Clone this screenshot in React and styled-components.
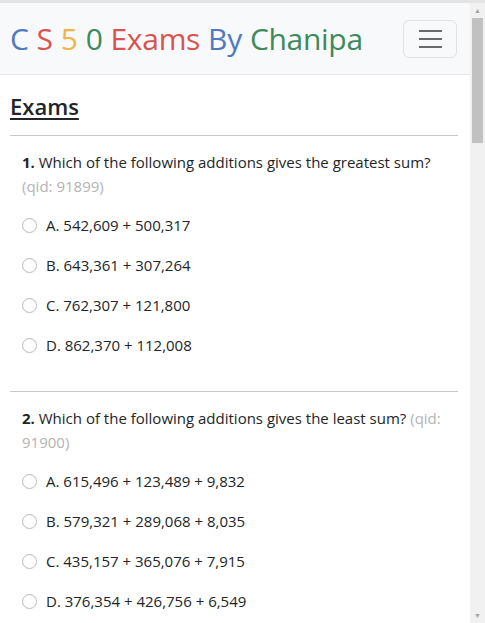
import React from "react";
import styled, { createGlobalStyle } from "styled-components";

const GlobalStyle = createGlobalStyle`
  html, body {
    margin: 0;
    padding: 0;
    overflow: hidden;
  }
  body {
    font-family: "Open Sans", "Noto Sans", sans-serif;
    color: #212529;
    background: #fff;
  }
`;

const exams = [
  {
    no: 1,
    text: "Which of the following additions gives the greatest sum?",
    qid: 91899,
    options: [
      "A. 542,609 + 500,317",
      "B. 643,361 + 307,264",
      "C. 762,307 + 121,800",
      "D. 862,370 + 112,008",
    ],
  },
  {
    no: 2,
    text: "Which of the following additions gives the least sum?",
    qid: 91900,
    options: [
      "A. 615,496 + 123,489 + 9,832",
      "B. 579,321 + 289,068 + 8,035",
      "C. 435,157 + 365,076 + 7,915",
      "D. 376,354 + 426,756 + 6,549",
    ],
  },
];

const brand = [
  { t: "C", c: "#4f7ac0" },
  { t: "S", c: "#d9534f" },
  { t: "5", c: "#f0b44c" },
  { t: "0", c: "#3d8a5c" },
  { t: "Exams", c: "#d9534f" },
  { t: "By", c: "#4f7ac0" },
  { t: "Chanipa", c: "#3d8a5c" },
];

const App = () => {
  return (
    <>
      <GlobalStyle />
      <Frame>
        <Page>
          <Navbar>
            <Brand>
              {brand.map((b, i) => (
                <BrandPart key={i} color={b.c}>
                  {b.t}
                </BrandPart>
              ))}
            </Brand>
            <Toggler aria-label="menu">
              <Bar />
              <Bar />
              <Bar />
            </Toggler>
          </Navbar>
          <Content>
            <Title>Exams</Title>
            {exams.map((q) => (
              <Question key={q.no}>
                <Rule />
                <QuestionText>
                  <b>{q.no}.</b> {q.text} <Qid>(qid: {q.qid})</Qid>
                </QuestionText>
                <Options>
                  {q.options.map((o) => (
                    <Option key={o}>
                      <Radio type="radio" name={"q" + q.no} />
                      <span>{o}</span>
                    </Option>
                  ))}
                </Options>
              </Question>
            ))}
          </Content>
        </Page>
        <Scrollbar>
          <Arrow>▲</Arrow>
          <Thumb />
          <Track />
          <Arrow>▼</Arrow>
        </Scrollbar>
      </Frame>
    </>
  );
};

export default App;

const Frame = styled.div`
  display: flex;
  height: 623px;
  box-sizing: border-box;
  border-top: 3px solid #e4e4e4;
  overflow: hidden;
`;

const Page = styled.div`
  flex: 1;
  display: flex;
  flex-direction: column;
  min-width: 0;
`;

const Navbar = styled.nav`
  height: 72px;
  flex-shrink: 0;
  box-sizing: border-box;
  display: flex;
  align-items: center;
  justify-content: space-between;
  padding: 0 13px 0 10px;
  background: #f8f9fa;
  border-bottom: 1px solid #e3e5e8;
`;

const Brand = styled.div`
  display: flex;
  gap: 8px;
  font-size: 30px;
  line-height: 1;
  letter-spacing: -0.3px;
`;

const BrandPart = styled.span`
  color: ${(p) => p.color};
`;

const Toggler = styled.button`
  width: 54px;
  height: 38px;
  border: 1px solid #e0e1e3;
  border-radius: 6px;
  background: transparent;
  display: flex;
  flex-direction: column;
  align-items: center;
  justify-content: center;
  gap: 6px;
  padding: 0;
`;

const Bar = styled.span`
  display: block;
  width: 23px;
  height: 2px;
  background: #6a6a6a;
`;

const Content = styled.main`
  padding: 18px 12px 0 10px;
`;

const Title = styled.h2`
  margin: 0 0 16px;
  font-size: 22px;
  font-weight: 600;
  text-decoration: underline;
  text-underline-offset: 3px;
  line-height: 1.2;
  color: #212529;
`;

const Question = styled.section`
  margin-bottom: 34px;
`;

const Rule = styled.hr`
  margin: 0;
  border: 0;
  border-top: 1px solid #c8c8c8;
`;

const QuestionText = styled.p`
  margin: 14px 0 0;
  padding: 0 12px;
  font-size: 15px;
  line-height: 24px;
  color: #212529;

  b {
    font-weight: 700;
  }
`;

const Qid = styled.span`
  color: #b3b3b3;
`;

const Options = styled.div`
  display: flex;
  flex-direction: column;
  gap: 16px;
  padding: 15px 12px 0;
`;

const Option = styled.label`
  display: flex;
  align-items: center;
  gap: 9px;
  height: 24px;
  font-size: 15px;
  color: #212529;
`;

const Radio = styled.input`
  appearance: none;
  margin: 0;
  width: 15px;
  height: 15px;
  border: 1px solid #b9b9b9;
  border-radius: 50%;
  background: #fff;
`;

const Scrollbar = styled.div`
  width: 15px;
  display: flex;
  flex-direction: column;
  background: #f1f1f1;
  align-items: center;
`;

const Arrow = styled.div`
  height: 15px;
  font-size: 7px;
  line-height: 15px;
  color: #a3a3a3;
`;

const Thumb = styled.div`
  width: 11px;
  height: 125px;
  background: #c1c1c1;
`;

const Track = styled.div`
  flex: 1;
`;
